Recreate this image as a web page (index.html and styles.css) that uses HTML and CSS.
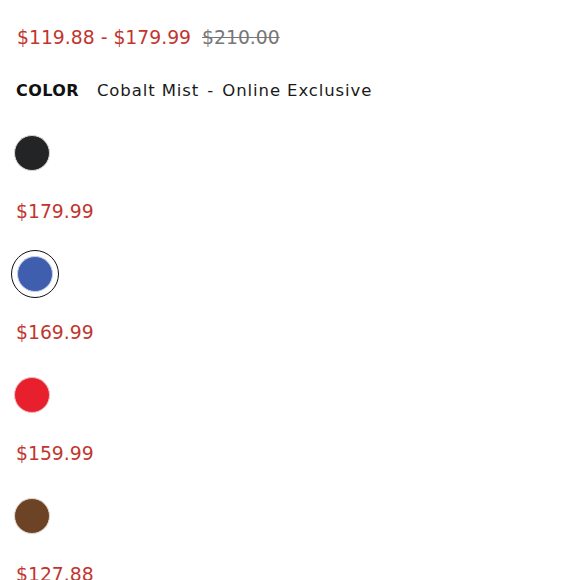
FILE: index.html
```html
<!DOCTYPE html>
<html>
<head>
<meta charset="utf-8">
<link rel="stylesheet" href="styles.css">
</head>
<body>
<div class="product">
  <div class="price-range">
    <span class="sale">$119.88 - $179.99</span>
    <span class="was">$210.00</span>
  </div>
  <div class="color-label">
    <span class="label">COLOR</span>
    <span class="value">Cobalt Mist <span class="sep">-</span> Online Exclusive</span>
  </div>
  <ul class="swatches">
    <li class="swatch-item">
      <span class="swatch"><span class="dot black"></span></span>
      <span class="price">$179.99</span>
    </li>
    <li class="swatch-item">
      <span class="swatch selected"><span class="dot blue"></span></span>
      <span class="price">$169.99</span>
    </li>
    <li class="swatch-item">
      <span class="swatch"><span class="dot red"></span></span>
      <span class="price">$159.99</span>
    </li>
    <li class="swatch-item">
      <span class="swatch"><span class="dot brown"></span></span>
      <span class="price">$127.88</span>
    </li>
  </ul>
</div>
</body>
</html>
```

FILE: styles.css
```css
html, body {
  margin: 0;
  padding: 0;
  background: #ffffff;
}
body {
  font-family: "DejaVu Sans", "Open Sans", sans-serif;
  color: #111;
  overflow: hidden;
  height: 580px;
}
.product {
  padding: 24px 0 0 16px;
}
.price-range {
  font-size: 18.8px;
  line-height: 28px;
  display: flex;
  gap: 11px;
  padding-left: 1px;
}
.sale {
  color: #c2352f;
}
.was {
  color: #777777;
  text-decoration: line-through;
}
.color-label {
  margin-top: 27px;
  font-size: 16.5px;
  line-height: 24px;
  display: flex;
  gap: 17px;
}
.label {
  font-weight: 700;
  font-size: 16px;
  letter-spacing: 0.4px;
  color: #111;
}
.value {
  color: #1a1a1a;
  letter-spacing: 0.9px;
  margin-left: 1px;
}
.sep {
  margin: 0 2px;
}
.swatches {
  list-style: none;
  margin: 26px 0 0 0;
  padding: 0;
  display: flex;
  flex-direction: column;
}
.swatch-item {
  display: flex;
  flex-direction: column;
  align-items: flex-start;
  height: 121px;
}
.swatch {
  height: 48px;
  margin-left: -2px;
  display: flex;
  align-items: center;
  box-sizing: border-box;
}
.swatch.selected {
  width: 48px;
  margin-left: -5px;
  justify-content: center;
  border-radius: 50%;
  border: 1.5px solid #111;
}
.dot {
  width: 36px;
  height: 36px;
  border-radius: 50%;
  box-sizing: border-box;
  border: 1.5px solid #dcd6d2;
}
.black { background: #222426; }
.blue { background: #3f5eae; border-color: #c3cdeb; }
.red { background: #e8202e; border-color: #f1bcc0; }
.brown { background: #6c4425; border-color: #e3d8cf; }
.price {
  margin-top: 21px;
  font-size: 18.8px;
  line-height: 28px;
  color: #c2352f;
}
```
